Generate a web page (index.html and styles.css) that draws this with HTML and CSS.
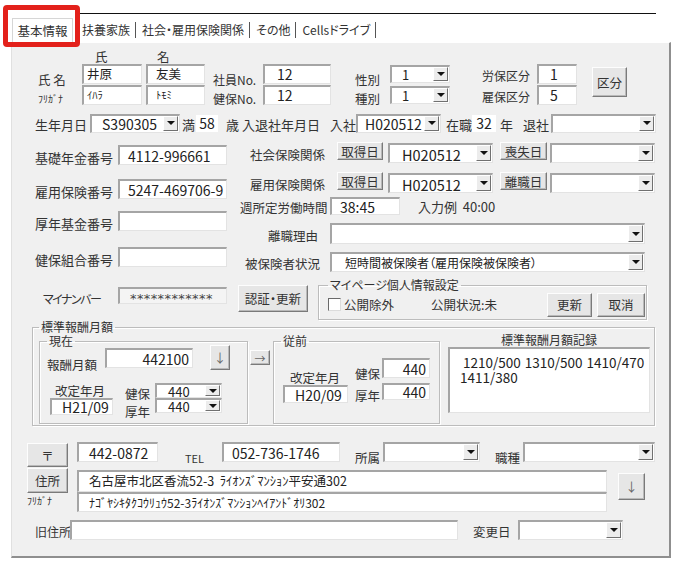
FILE: index.html
```html
<!DOCTYPE html>
<html lang="ja">
<head>
    <meta charset="utf-8">
    <title>社員情報 - 基本情報</title>
    <link rel="stylesheet" href="styles.css">
</head>
<body>
<div class="page">
    <div class="topline"></div>
    <div class="tabs">
        <div class="tab active">基本情報</div>
        <div class="tab">扶養家族</div>
        <div class="tab">社会・雇用保険関係</div>
        <div class="tab">その他</div>
        <div class="tab">Cellsドライブ</div>
    </div>
    <div class="highlight"></div>

    <div class="panel">
        <!-- 氏名・番号 -->
        <div class="name-block">
            <div class="col name-lbls">
                <div class="cell lbl top">氏&nbsp;名</div>
                <div class="cell lbl bot kana-lbl">ﾌﾘｶﾞﾅ</div>
            </div>
            <div class="col sei">
                <div class="head">氏</div>
                <div class="cell"><div class="tb kanji">井原</div></div>
                <div class="cell"><div class="tb kana">ｲﾊﾗ</div></div>
            </div>
            <div class="col mei">
                <div class="head">名</div>
                <div class="cell"><div class="tb kanji">友美</div></div>
                <div class="cell"><div class="tb kana">ﾄﾓﾐ</div></div>
            </div>
            <div class="col no-lbls">
                <div class="cell lbl top">社員No.</div>
                <div class="cell lbl bot">健保No.</div>
            </div>
            <div class="col no-vals">
                <div class="cell"><div class="tb">12</div></div>
                <div class="cell"><div class="tb">12</div></div>
            </div>
            <div class="col sex-lbls">
                <div class="cell lbl top">性別</div>
                <div class="cell lbl bot">種別</div>
            </div>
            <div class="col sex-vals">
                <div class="cell"><div class="cb"><span class="v">1</span><span class="arr"></span></div></div>
                <div class="cell"><div class="cb"><span class="v">1</span><span class="arr"></span></div></div>
            </div>
            <div class="col kubun-lbls">
                <div class="cell lbl">労保区分</div>
                <div class="cell lbl">雇保区分</div>
            </div>
            <div class="col kubun-vals">
                <div class="cell"><div class="tb">1</div></div>
                <div class="cell"><div class="tb">5</div></div>
            </div>
            <div class="btn kubun-btn">区分</div>
        </div>

        <!-- 生年月日・入退社 -->
        <div class="birth-row">
            <span class="lbl">生年月日</span>
            <div class="cb birth"><span class="v">S390305</span><span class="arr"></span></div>
            <span class="lbl man">満</span>
            <span class="num-box age">58</span>
            <span class="lbl sai">歳</span>
            <span class="lbl nyutai">入退社年月日</span>
            <span class="lbl nyusha">入社</span>
            <div class="cb hire"><span class="v">H020512</span><span class="arr"></span></div>
            <span class="lbl zaishoku">在職</span>
            <span class="num-box years">32</span>
            <span class="lbl nen">年</span>
            <span class="lbl taisha">退社</span>
            <div class="cb retire"><span class="v"></span><span class="arr"></span></div>
        </div>

        <!-- 番号・保険関係 -->
        <div class="ins-block">
            <div class="nums">
                <div class="num-row">
                    <span class="lbl num-lbl">基礎年金番号</span>
                    <div class="tb">4112-996661</div>
                </div>
                <div class="num-row row-koyo">
                    <span class="lbl num-lbl">雇用保険番号</span>
                    <div class="tb">5247-469706-9</div>
                </div>
                <div class="num-row row-kikin">
                    <span class="lbl num-lbl">厚年基金番号</span>
                    <div class="tb"></div>
                </div>
                <div class="num-row row-kumiai">
                    <span class="lbl num-lbl">健保組合番号</span>
                    <div class="tb"></div>
                </div>
            </div>

            <div class="rel">
                <div class="rel-row">
                    <span class="lbl rel-lbl">社会保険関係</span>
                    <div class="btn get-btn">取得日</div>
                    <div class="cb get-date"><span class="v">H020512</span><span class="arr"></span></div>
                    <div class="btn lose-btn">喪失日</div>
                    <div class="cb lose-date"><span class="v"></span><span class="arr"></span></div>
                </div>
                <div class="rel-row koyo-rel">
                    <span class="lbl rel-lbl">雇用保険関係</span>
                    <div class="btn get-btn">取得日</div>
                    <div class="cb get-date"><span class="v">H020512</span><span class="arr"></span></div>
                    <div class="btn lose-btn">離職日</div>
                    <div class="cb lose-date"><span class="v"></span><span class="arr"></span></div>
                </div>
                <div class="rel-row week-row">
                    <span class="lbl rel-lbl">週所定労働時間</span>
                    <div class="tb week">38:45</div>
                    <span class="lbl example">入力例&nbsp;&nbsp;40:00</span>
                </div>
                <div class="rel-row reason-row">
                    <span class="lbl rel-lbl">離職理由</span>
                    <div class="cb wide"><span class="v"></span><span class="arr"></span></div>
                </div>
                <div class="rel-row status-row">
                    <span class="lbl rel-lbl">被保険者状況</span>
                    <div class="cb wide"><span class="v">短時間被保険者（雇用保険被保険者）</span><span class="arr"></span></div>
                </div>
            </div>
        </div>

        <!-- マイナンバー -->
        <div class="mynum-row">
            <span class="lbl mynum-lbl">マイナンバー</span>
            <div class="tb mynum">************</div>
            <div class="btn auth-btn">認証・更新</div>
            <fieldset class="group mypage">
                <legend>マイページ個人情報設定</legend>
                <div class="mypage-body">
                    <span class="check"></span>
                    <span class="check-lbl">公開除外</span>
                    <span class="state">公開状況:未</span>
                    <div class="btn upd-btn">更新</div>
                    <div class="btn cancel-btn">取消</div>
                </div>
            </fieldset>
        </div>

        <!-- 標準報酬月額 -->
        <fieldset class="group std">
            <legend>標準報酬月額</legend>
            <div class="std-body">
                <fieldset class="group now">
                    <legend>現在</legend>
                    <div class="pay-row">
                        <span class="lbl pay-lbl">報酬月額</span>
                        <div class="tb pay">442100</div>
                        <div class="btn down-btn">↓</div>
                    </div>
                    <div class="rev-row">
                        <div class="rev-col">
                            <div class="rev-lbl">改定年月</div>
                            <div class="tb rev">H21/09</div>
                        </div>
                        <div class="kind-col">
                            <div class="kind">健保</div>
                            <div class="kind">厚年</div>
                        </div>
                        <div class="sel-col">
                            <div class="cb"><span class="v">440</span><span class="arr"></span></div>
                            <div class="cb"><span class="v">440</span><span class="arr"></span></div>
                        </div>
                    </div>
                </fieldset>
                <div class="btn next-btn">→</div>
                <fieldset class="group prev">
                    <legend>従前</legend>
                    <div class="prev-body">
                        <div class="prev-rev">
                            <div class="rev-lbl">改定年月</div>
                            <div class="tb rev">H20/09</div>
                        </div>
                        <div class="prev-kind">
                            <div class="kind k1">健保</div>
                            <div class="kind k2">厚年</div>
                        </div>
                        <div class="prev-vals">
                            <div class="tb v1">440</div>
                            <div class="tb v2">440</div>
                        </div>
                    </div>
                </fieldset>
                <div class="record">
                    <div class="record-title">標準報酬月額記録</div>
                    <div class="record-box">
                        <div class="first">1210/500 1310/500 1410/470</div>
                        <div>1411/380</div>
                    </div>
                </div>
            </div>
        </fieldset>

        <!-- 連絡先・住所 -->
        <div class="post-row">
            <div class="btn post-btn">〒</div>
            <div class="tb zip">442-0872</div>
            <span class="lbl tel-lbl">TEL</span>
            <div class="tb tel">052-736-1746</div>
            <span class="lbl dept-lbl">所属</span>
            <div class="cb dept"><span class="v"></span><span class="arr"></span></div>
            <span class="lbl job-lbl">職種</span>
            <div class="cb job"><span class="v"></span><span class="arr"></span></div>
        </div>

        <div class="addr-block">
            <div class="addr-side">
                <div class="btn addr-btn">住所</div>
                <div class="addr-kana-lbl">ﾌﾘｶﾞﾅ</div>
            </div>
            <div class="addr-lines">
                <div class="tb addr">名古屋市北区香流52-3&nbsp;&nbsp;ﾗｲｵﾝｽﾞﾏﾝｼｮﾝ平安通302</div>
                <div class="tb addr-kana">ﾅｺﾞﾔｼｷﾀｸｺｳﾘｭｳ52-3ﾗｲｵﾝｽﾞﾏﾝｼｮﾝﾍｲｱﾝﾄﾞｵﾘ302</div>
            </div>
            <div class="btn addr-down">↓</div>
        </div>

        <div class="old-row">
            <span class="lbl old-lbl">旧住所</span>
            <div class="tb old"></div>
            <span class="lbl change-lbl">変更日</span>
            <div class="cb change"><span class="v"></span><span class="arr"></span></div>
        </div>
    </div>
</div>
</body>
</html>
```

FILE: styles.css
```css
/* 全体 */
* {
    box-sizing: border-box;
}

body {
    margin: 0;
    background: #fff;
    font-family: "Noto Sans CJK JP", "Noto Sans", sans-serif;
    font-size: 12.5px;
    font-feature-settings: "palt";
    color: #333;
}

.page {
    position: relative;
    width: 677px;
    height: 565px;
    overflow: hidden;
}

/* 上の線とタブ */
.topline {
    margin: 13px 0 0 80px;
    width: 576px;
    height: 1px;
    background: #111;
}

.tabs {
    display: flex;
    align-items: center;
    height: 24px;
    margin-top: 4px;
    padding-left: 12px;
}

.tab {
    padding: 0 5px 0 6px;
    border-right: 1px solid #555;
    font-size: 12px;
    line-height: 16px;
    white-space: nowrap;
}

.tab.active {
    width: 61px;
    height: 24px;
    margin-right: 3px;
    padding: 0;
    line-height: 24px;
    text-align: center;
    font-size: 12.5px;
    background: #fff;
    border: 1px solid #d6d6d6;
    border-bottom: none;
}

/* 注目枠（赤） */
.highlight {
    position: absolute;
    left: 3px;
    top: 5px;
    width: 77px;
    height: 42px;
    border: 5px solid #e3211b;
    border-radius: 4px;
}

/* タブの中身 */
.panel {
    margin-left: 11px;
    width: 660px;
    height: 516px;
    background: #f0f0f0;
    border-left: 1px solid #e0e0e0;
    border-top: 1px solid #fff;
    border-right: 2px solid #8f8f8f;
    border-bottom: 2px solid #8f8f8f;
}

.panel * {
    flex-shrink: 0;
}

/* 共通部品 */
.lbl {
    white-space: nowrap;
    padding-top: 3px;
}

.tb {
    display: flex;
    align-items: center;
    height: 20px;
    padding-left: 8px;
    background: #fff;
    border-style: solid;
    border-width: 2px 1px 1px 2px;
    border-color: #a5a5a5 #e3e3e3 #e3e3e3 #a5a5a5;
    font-size: 14px;
    line-height: 1;
    color: #222;
    white-space: nowrap;
}

.cb {
    display: flex;
    height: 20px;
    background: #fff;
    border-style: solid;
    border-width: 2px 1px 1px 2px;
    border-color: #a5a5a5 #e3e3e3 #e3e3e3 #a5a5a5;
}

.cb .v {
    flex: 1;
    min-width: 0;
    display: flex;
    align-items: center;
    padding-left: 8px;
    font-size: 14px;
    line-height: 1;
    color: #222;
    white-space: nowrap;
}

.cb .arr {
    width: 15px;
    margin: 0 1px 1px 0;
    display: flex;
    align-items: center;
    justify-content: center;
    background: #ececec;
    border: 1px solid;
    border-color: #fff #707070 #707070 #fff;
}

.cb .arr::after {
    content: "";
    border-left: 4px solid transparent;
    border-right: 4px solid transparent;
    border-top: 4px solid #111;
}

.btn {
    display: flex;
    align-items: center;
    justify-content: center;
    background: #e6e6e6;
    border: 1px solid;
    border-color: #fdfdfd #7a7a7a #7a7a7a #fdfdfd;
    box-shadow: inset -1px -1px 0 #b9b9b9;
    font-size: 12.5px;
    color: #333;
    white-space: nowrap;
}

.group {
    margin: 0;
    min-width: 0;
    border: 1px solid #bcbcbc;
    box-shadow: inset 1px 1px 0 #fff, 1px 1px 0 #fff;
}

.group legend {
    padding: 0 2px;
    font-size: 12px;
    line-height: 14px;
}

/* 氏名ブロック */
.name-block {
    display: flex;
    align-items: flex-end;
    height: 55px;
    margin: 7px 0 0 26px;
}

.col {
    display: flex;
    flex-direction: column;
}

.cell {
    height: 21px;
    display: flex;
    align-items: center;
}

.cell > .tb,
.cell > .cb {
    width: 100%;
}

.cell.lbl.top {
    padding-top: 11px;
}

.cell.lbl.bot {
    padding-top: 7px;
}

.head {
    height: 13px;
    line-height: 13px;
}

.name-lbls {
    width: 44px;
}

.kana-lbl {
    font-size: 10px;
}

.sei {
    width: 60px;
}

.sei .head {
    padding-left: 13px;
}

.sei .tb {
    padding-left: 3px;
}

.mei {
    width: 59px;
    margin-left: 4px;
}

.mei .head {
    padding-left: 11px;
}

.mei .tb {
    padding-left: 8px;
}

.tb.kanji {
    font-size: 12.5px;
}

.tb.kana {
    font-size: 10.5px;
}

.no-lbls {
    width: 50px;
    margin-left: 8px;
    font-size: 12px;
}

.no-vals {
    width: 68px;
}

.no-vals .tb {
    padding-left: 12px;
}

.sex-lbls {
    width: 35px;
    margin-left: 24px;
}

.sex-vals {
    width: 60px;
}

.sex-vals .cb {
    height: 18px;
}

.sex-vals .v {
    padding-left: 10px;
    font-size: 13px;
}

.kubun-lbls {
    width: 55px;
    margin-left: 32px;
    font-size: 12px;
}

.kubun-vals {
    width: 40px;
}

.kubun-vals .tb {
    padding-left: 11px;
}

.kubun-btn {
    width: 35px;
    height: 30px;
    margin-left: 15px;
    margin-top: 17px;
    align-self: flex-start;
}

/* 生年月日の行 */
.birth-row {
    display: flex;
    align-items: center;
    height: 20px;
    margin: 8px 0 0 23px;
    font-size: 13px;
}

.birth-row .cb {
    height: 19px;
}

.cb.birth {
    width: 90px;
    margin-left: 3px;
}

.cb.birth .v {
    padding-left: 10px;
}

.cb.hire .v {
    padding-left: 7px;
}

.man {
    margin-left: 2px;
}

.num-box {
    display: flex;
    align-items: center;
    justify-content: center;
    height: 17px;
    background: #fff;
    font-size: 14px;
    color: #222;
}

.age {
    width: 22px;
    margin-left: 1px;
}

.sai {
    margin-left: 8px;
}

.nyutai {
    margin-left: 3px;
}

.nyusha {
    margin-left: 10px;
}

.cb.hire {
    width: 85px;
}

.zaishoku {
    margin-left: 5px;
}

.years {
    width: 24px;
}

.nen {
    margin-left: 4px;
}

.taisha {
    margin-left: 10px;
}

.cb.retire {
    width: 105px;
    margin-left: 2px;
}

/* 番号・保険関係 */
.ins-block {
    display: flex;
    align-items: flex-start;
    margin: 9px 0 0 23px;
}

.nums {
    width: 192px;
    padding-top: 3px;
}

.num-row {
    display: flex;
    align-items: center;
    height: 20px;
}

.num-lbl {
    width: 83px;
    font-size: 13px;
    padding-top: 4px;
}

.num-row .tb {
    width: 109px;
}

.row-koyo {
    margin-top: 14px;
}

.row-kikin {
    margin-top: 12px;
}

.row-kumiai {
    margin-top: 16px;
}

.rel {
    width: 415px;
    margin-left: 13px;
}

.rel-row {
    display: flex;
    align-items: flex-start;
    height: 21px;
}

.rel-lbl {
    width: 85px;
    align-self: center;
    text-align: right;
}

.rel-row .btn {
    width: 46px;
    height: 18px;
}

.get-btn {
    margin-left: 12px;
}

.rel-row .cb {
    width: 105px;
    margin-top: 1px;
}

.rel-row .get-date {
    margin-left: 5px;
}

.rel-row .get-date .v {
    padding: 3px 0 0 12px;
    font-size: 14.5px;
}

.rel-row .lose-btn {
    width: 47px;
    margin-left: 7px;
}

.rel-row .lose-date {
    margin-left: 3px;
}

.koyo-rel {
    margin-top: 9px;
}

.week-row {
    height: 18px;
    margin-top: 4px;
}

.tb.week {
    width: 70px;
    height: 18px;
    margin-left: 5px;
}

.example {
    margin-left: 18px;
    padding-top: 0;
    font-size: 13px;
}

.reason-row {
    margin-top: 8px;
}

.reason-row .rel-lbl {
    padding-right: 7px;
}

.status-row {
    height: 20px;
    margin-top: 8px;
}

.status-row .rel-lbl {
    padding-right: 5px;
}

.rel-row .cb.wide {
    width: 315px;
    height: 21px;
    margin: 0 0 0 5px;
}

.status-row .cb.wide {
    height: 20px;
}

.cb.wide .v {
    padding-left: 13px;
    font-size: 12px;
}

/* マイナンバーの行 */
.mynum-row {
    display: flex;
    align-items: flex-start;
    height: 42px;
    margin: 6px 0 0 31px;
}

.mynum-lbl {
    width: 75px;
    margin-top: 11px;
    font-size: 12px;
    line-height: 14px;
    letter-spacing: -1.5px;
}

.tb.mynum {
    width: 109px;
    height: 17px;
    margin-top: 9px;
    padding: 4px 0 0 10px;
    background: #f4f4f4;
    font-family: "DejaVu Sans", sans-serif;
    font-size: 13px;
    letter-spacing: 0.4px;
    color: #444;
}

.auth-btn {
    width: 70px;
    height: 27px;
    margin: 7px 0 0 11px;
}

.mypage {
    width: 329px;
    height: 42px;
    margin-left: 10px;
    padding: 0 1px 0 9px;
}

.mypage-body {
    display: flex;
    align-items: center;
    height: 25px;
}

.check {
    width: 13px;
    height: 13px;
    background: #fff;
    border: 1px solid;
    border-color: #6a6a6a #dcdcdc #dcdcdc #6a6a6a;
}

.check-lbl {
    margin-left: 3px;
}

.state {
    margin-left: 37px;
}

.upd-btn {
    width: 45px;
    height: 24px;
    margin-left: auto;
}

.cancel-btn {
    width: 48px;
    height: 24px;
    margin-left: 5px;
}

/* 標準報酬月額 */
.std {
    width: 623px;
    height: 106px;
    margin-left: 20px;
    padding: 0 0 0 6px;
}

.std-body {
    display: flex;
    align-items: flex-start;
}

.now {
    width: 209px;
    height: 90px;
    padding: 0 0 0 7px;
}

.pay-row {
    display: flex;
    align-items: flex-start;
    height: 22px;
}

.pay-lbl {
    width: 58px;
    padding-top: 7px;
}

.tb.pay {
    width: 88px;
    justify-content: flex-end;
    padding: 0 3px 0 0;
}

.down-btn {
    width: 20px;
    height: 25px;
    margin: -3px 0 0 17px;
    color: #666;
}

.rev-row {
    display: flex;
    align-items: flex-start;
    margin-top: 13px;
}

.rev-col {
    width: 63px;
    margin-left: 3px;
}

.rev-lbl {
    height: 15px;
    padding-left: 5px;
    line-height: 15px;
}

.tb.rev {
    height: 17px;
    padding-left: 10px;
}

.kind-col {
    width: 30px;
    margin-left: 12px;
}

.kind {
    height: 15px;
    line-height: 15px;
    padding-top: 3px;
}

.kind-col .kind + .kind {
    margin-top: 3px;
}

.sel-col {
    width: 67px;
}

.sel-col .cb {
    height: 15px;
}

.sel-col .v {
    padding-left: 11px;
    font-size: 13px;
}

.next-btn {
    width: 20px;
    height: 15px;
    margin: 16px 0 0 2px;
    color: #666;
    font-size: 11px;
}

.prev {
    width: 167px;
    height: 90px;
    margin-left: 3px;
    padding: 0 0 0 7px;
}

.prev-body {
    display: flex;
    align-items: flex-start;
}

.prev-rev {
    width: 65px;
    margin-left: 2px;
}

.prev-rev .rev-lbl {
    height: 14px;
    margin-top: 22px;
    padding-left: 7px;
}

.prev-rev .tb.rev {
    height: 18px;
    margin-top: 1px;
}

.prev-kind {
    width: 27px;
    margin-left: 7px;
}

.prev-kind .k1 {
    margin-top: 15px;
}

.prev-kind .k2 {
    margin-top: 7px;
}

.prev-vals {
    width: 48px;
}

.prev-vals .tb {
    justify-content: flex-end;
    padding: 0 3px 0 0;
}

.prev-vals .v1 {
    margin-top: 10px;
}

.prev-vals .v2 {
    height: 17px;
    margin-top: 5px;
}

.record {
    width: 202px;
    margin: -1px 0 0 8px;
}

.record-title {
    height: 14px;
    line-height: 14px;
    text-align: center;
    font-size: 12px;
}

.record-box {
    height: 66px;
    padding: 6px 0 0 10px;
    background: #fff;
    border-style: solid;
    border-width: 2px 1px 1px 2px;
    border-color: #a5a5a5 #e3e3e3 #e3e3e3 #a5a5a5;
    font-size: 13.5px;
    line-height: 15px;
    color: #222;
    word-spacing: 1px;
}

.record-box .first {
    text-indent: 3px;
}

/* 連絡先 */
.post-row {
    display: flex;
    align-items: flex-start;
    height: 25px;
    margin: 16px 0 0 15px;
}

.post-btn {
    width: 41px;
    height: 24px;
    margin-top: 1px;
}

.tb.zip {
    width: 81px;
    margin-left: 9px;
    padding-left: 10px;
}

.tel-lbl {
    width: 37px;
    margin-left: 27px;
    padding-top: 8px;
    font-size: 11px;
}

.tb.tel {
    width: 118px;
}

.dept-lbl,
.job-lbl {
    width: 28px;
    margin-left: 15px;
    padding-top: 6px;
}

.cb.dept {
    width: 97px;
}

.cb.job {
    width: 132px;
}

/* 住所 */
.addr-block {
    display: flex;
    align-items: flex-start;
    margin: 1px 0 0 15px;
}

.addr-side {
    width: 41px;
}

.addr-btn {
    height: 25px;
}

.addr-kana-lbl {
    margin-top: 1px;
    font-size: 10px;
    line-height: 14px;
}

.addr-lines {
    width: 530px;
    margin: 2px 0 0 9px;
}

.tb.addr {
    height: 22px;
    padding-left: 10px;
    font-size: 12.5px;
}

.tb.addr-kana {
    height: 20px;
    padding-left: 10px;
    font-size: 12px;
}

.addr-down {
    width: 27px;
    height: 27px;
    margin: 5px 0 0 11px;
    color: #666;
}

/* 旧住所 */
.old-row {
    display: flex;
    align-items: center;
    height: 20px;
    margin: 8px 0 0 23px;
}

.old-lbl {
    width: 35px;
    font-size: 12px;
}

.tb.old {
    width: 388px;
}

.change-lbl {
    width: 45px;
    margin-left: 15px;
}

.cb.change {
    width: 105px;
}
```
